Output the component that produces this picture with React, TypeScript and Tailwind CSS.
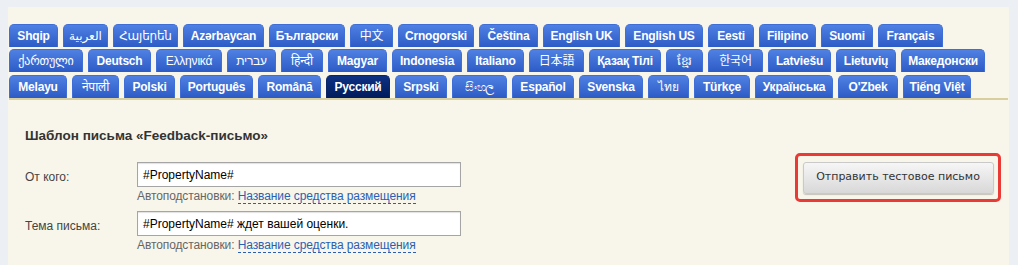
import React from "react"

type Tab = { label: string; w: string; active?: boolean; thin?: boolean }

const rows: Tab[][] = [
  [
    { label: "Shqip", w: "w-[49px]" },
    { label: "العربية", w: "w-[45px]", thin: true },
    { label: "Հայերեն", w: "w-[65px]", thin: true },
    { label: "Azərbaycan", w: "w-[81px]" },
    { label: "Български", w: "w-[76px]" },
    { label: "中文", w: "w-[43px]", thin: true },
    { label: "Crnogorski", w: "w-[76px]" },
    { label: "Čeština", w: "w-[59px]" },
    { label: "English UK", w: "w-[77px]" },
    { label: "English US", w: "w-[78px]" },
    { label: "Eesti", w: "w-[46px]" },
    { label: "Filipino", w: "w-[57px]" },
    { label: "Suomi", w: "w-[52px]" },
    { label: "Français", w: "w-[65px]" },
  ],
  [
    { label: "ქართული", w: "w-[74px]", thin: true },
    { label: "Deutsch", w: "w-[63px]" },
    { label: "Ελληνικά", w: "w-[66px]", thin: true },
    { label: "עברית", w: "w-[49px]", thin: true },
    { label: "हिन्दी", w: "w-[42px]", thin: true },
    { label: "Magyar", w: "w-[59px]" },
    { label: "Indonesia", w: "w-[70px]" },
    { label: "Italiano", w: "w-[57px]" },
    { label: "日本語", w: "w-[55px]", thin: true },
    { label: "Қазақ Тілі", w: "w-[72px]" },
    { label: "ខ្មែរ", w: "w-[37px]", thin: true },
    { label: "한국어", w: "w-[55px]", thin: true },
    { label: "Latviešu", w: "w-[63px]" },
    { label: "Lietuvių", w: "w-[60px]" },
    { label: "Македонски", w: "w-[84px]" },
  ],
  [
    { label: "Melayu", w: "w-[58px]" },
    { label: "नेपाली", w: "w-[47px]", thin: true },
    { label: "Polski", w: "w-[51px]" },
    { label: "Português", w: "w-[73px]" },
    { label: "Română", w: "w-[63px]" },
    { label: "Русский", w: "w-[64px]", active: true },
    { label: "Srpski", w: "w-[52px]" },
    { label: "සිංහල", w: "w-[55px]", thin: true },
    { label: "Español", w: "w-[62px]" },
    { label: "Svenska", w: "w-[64px]" },
    { label: "ไทย", w: "w-[41px]", thin: true },
    { label: "Türkçe", w: "w-[56px]" },
    { label: "Українська", w: "w-[78px]" },
    { label: "O'Zbek", w: "w-[60px]" },
    { label: "Tiếng Việt", w: "w-[68px]" },
  ],
]

const sans = "font-['Liberation_Sans','Noto_Sans','DejaVu_Sans','Noto_Sans_CJK_JP',sans-serif]"

function LangTab({ tab }: { tab: Tab }) {
  return (
    <div
      className={`${tab.w} h-[23px] shrink-0 flex items-center justify-center rounded-t-[5px] border border-b-0 text-[12px] tracking-[-0.2px] text-white whitespace-nowrap overflow-hidden ${
        tab.thin ? "font-normal" : "font-bold"
      } ${
        tab.active
          ? "bg-gradient-to-b from-[#0d3183] to-[#021c5c] border-[#0a2666]"
          : "bg-gradient-to-b from-[#4f80e2] to-[#2d5bc6] border-[#3f6fd6]"
      }`}
    >
      {tab.label}
    </div>
  )
}

function Field({ label, value }: { label: string; value: string }) {
  return (
    <div className="flex">
      <div className="w-[112px] pt-[6px] text-[12px] text-[#444]">{label}</div>
      <div className="flex flex-col">
        <div className="w-[324px] h-[25px] bg-white border border-[#a5a5a5] shadow-[inset_0_1px_1px_rgba(0,0,0,0.12)] px-[5px] flex items-center text-[12px] text-black">
          {value}
        </div>
        <div className="mt-[2px] text-[12px] leading-[15px] tracking-[-0.1px] text-[#666]">
          Автоподстановки:{" "}
          <span className="text-[#2b5fb4] border-b border-dashed border-[#2b5fb4]">
            Название средства размещения
          </span>
        </div>
      </div>
    </div>
  )
}

export default function App() {
  return (
    <div className={`min-h-screen bg-[#eceff3] pt-[7px] pl-[8px] pr-[9px] ${sans}`}>
      <div className="bg-[#f8f6ea] min-h-[258px] pt-[17px] px-px">
        <div className="flex flex-col gap-[2px] border-b-2 border-[#d8cf9f]">
          {rows.map((row, i) => (
            <div key={i} className={`flex gap-[5px] ${i === 2 ? "mt-px" : ""}`}>
              {row.map((t) => (
                <LangTab key={t.label} tab={t} />
              ))}
            </div>
          ))}
        </div>

        <div className="flex justify-between pl-[16px] pr-[7px]">
          <div className="pt-[28px]">
            <div className="text-[13.5px] leading-[15px] font-bold text-[#333]">
              Шаблон письма «Feedback-письмо»
            </div>
            <div className="mt-[19px] flex flex-col gap-[7px]">
              <Field label="От кого:" value="#PropertyName#" />
              <Field label="Тема письма:" value="#PropertyName# ждет вашей оценки." />
            </div>
          </div>

          <div className="mt-[53px] self-start w-[206px] h-[49px] border-[3px] border-[#ea3a36] rounded-[5px] flex items-center justify-center">
            <button className="w-[191px] h-[32px] rounded-[3px] border border-[#c9c9c9] bg-gradient-to-b from-[#f6f6f6] to-[#d8d8d8] shadow-[0_1px_1px_rgba(0,0,0,0.2)] text-[11px] text-[#333] font-['DejaVu_Sans',sans-serif]">
              Отправить тестовое письмо
            </button>
          </div>
        </div>
      </div>
    </div>
  )
}
